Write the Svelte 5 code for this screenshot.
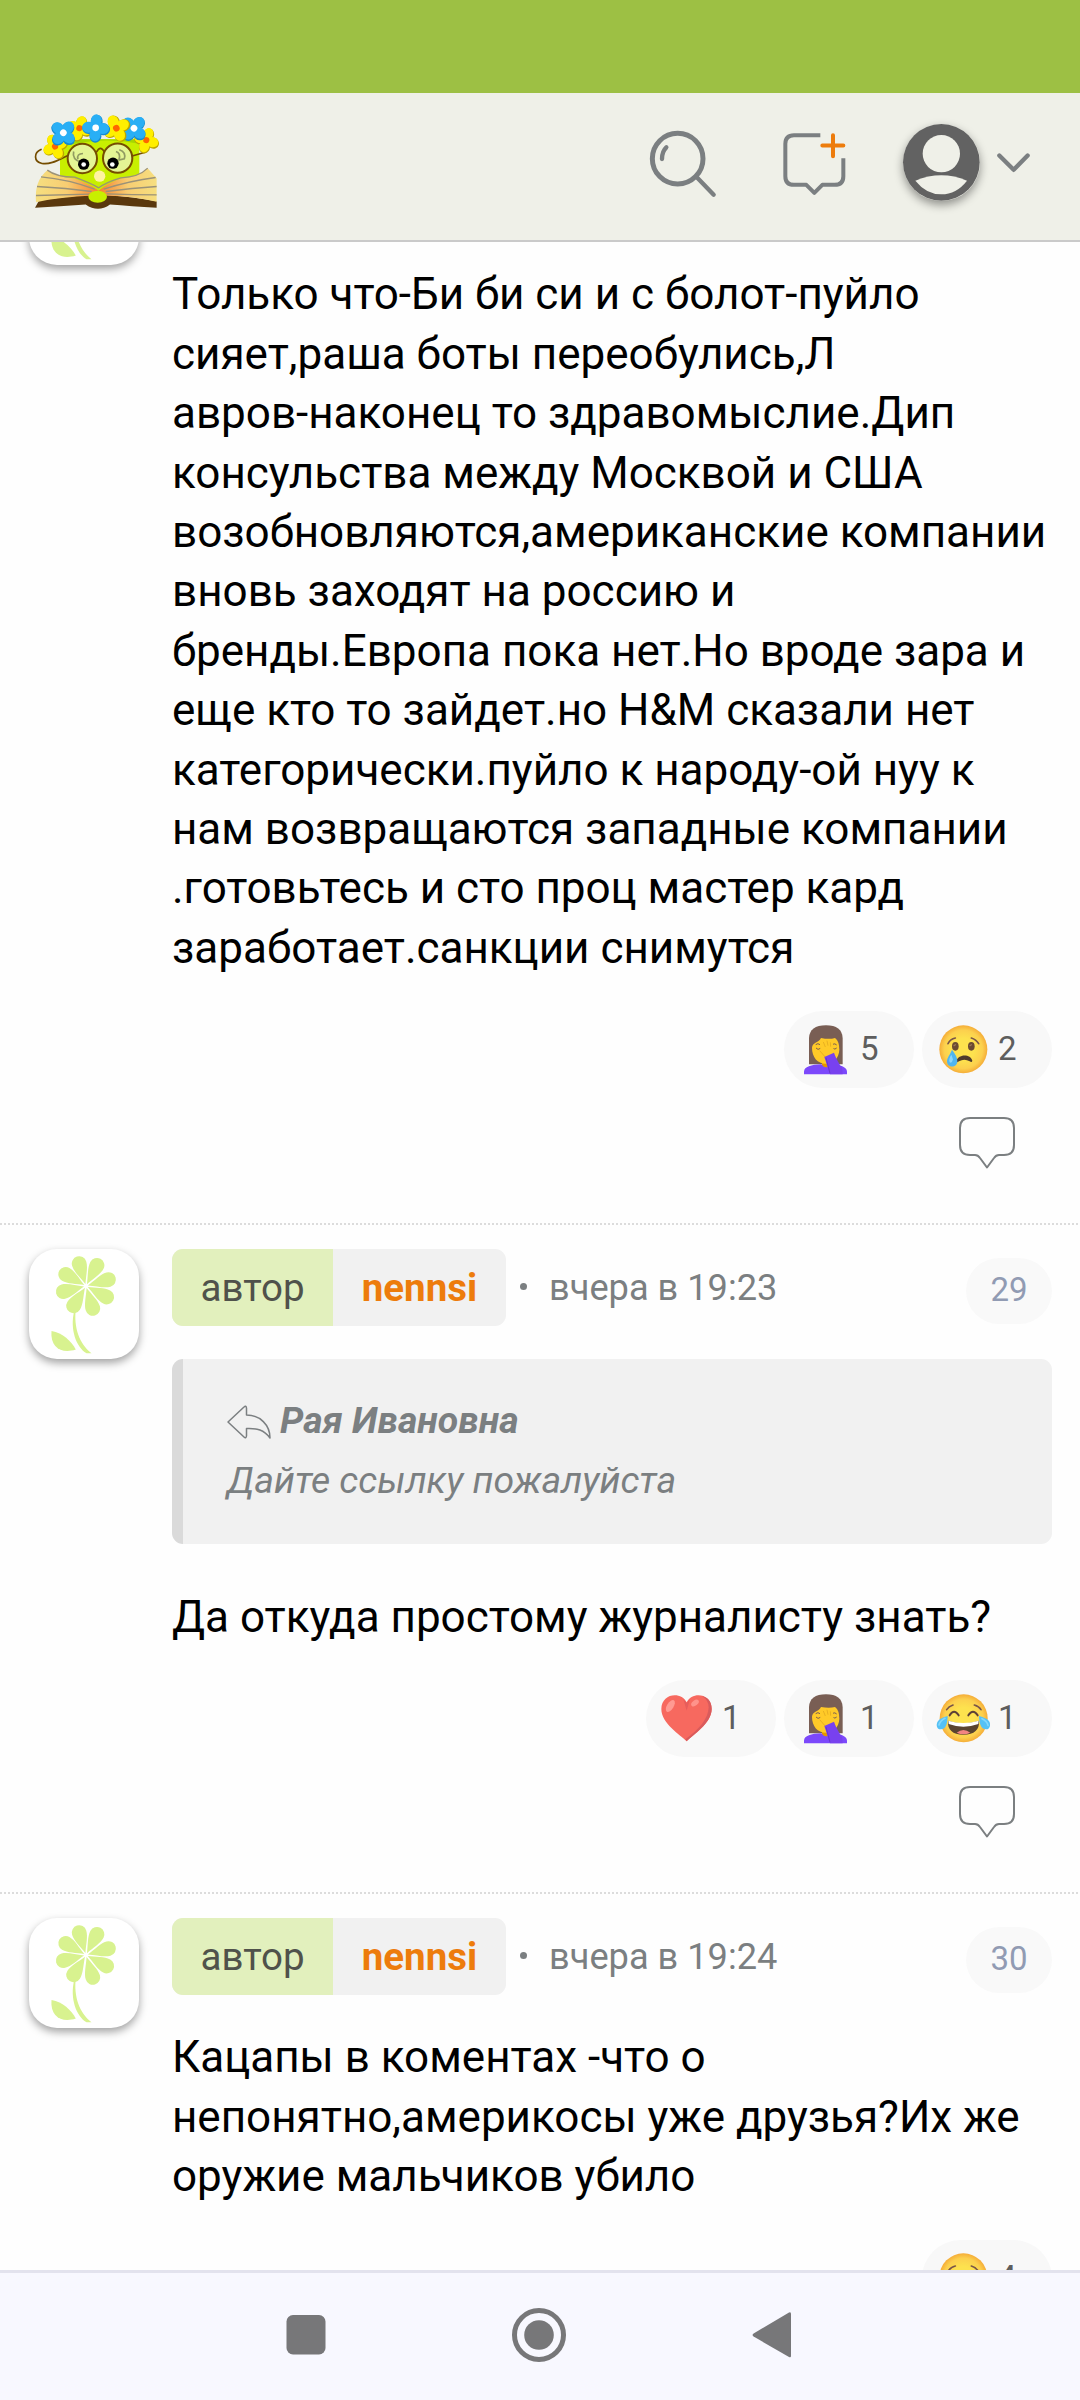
<script lang="ts">
  type Reaction = { kind: string; count: number };
  type Comment = {
    number?: number;
    author?: string;
    time?: string;
    quote?: { name: string; text: string };
    text: string;
    reactions: Reaction[];
  };

  const petals = [-17, 28, 74, 118, 163, 212, 256, 300];

  let comments = $state<Comment[]>([
    {
      text: `Только что-Би би си и с болот-пуйло
сияет,раша боты переобулись,Л
авров-наконец то здравомыслие.Дип
консульства между Москвой и США
возобновляются,американские компании
вновь заходят на россию и
бренды.Европа пока нет.Но вроде зара и
еще кто то зайдет.но H&M сказали нет
категорически.пуйло к народу-ой нуу к
нам возвращаются западные компании
.готовьтесь и сто проц мастер кард
заработает.санкции снимутся`,
      reactions: [
        { kind: "facepalm", count: 5 },
        { kind: "cry", count: 2 },
      ],
    },
    {
      number: 29,
      author: "nennsi",
      time: "вчера в 19:23",
      quote: { name: "Рая Ивановна", text: "Дайте ссылку пожалуйста" },
      text: "Да откуда простому журналисту знать?",
      reactions: [
        { kind: "heart", count: 1 },
        { kind: "facepalm", count: 1 },
        { kind: "joy", count: 1 },
      ],
    },
    {
      number: 30,
      author: "nennsi",
      time: "вчера в 19:24",
      text: `Кацапы в коментах -что о
непонятно,америкосы уже друзья?Их же
оружие мальчиков убило`,
      reactions: [{ kind: "cry", count: 4 }],
    },
  ]);
</script>

{#snippet blossom(x, y, r, fill, edge, heart)}
  <g transform="translate({x} {y}) rotate({r})">
    {#each [0, 90, 180, 270] as a}
      <ellipse cy="-22" rx="18" ry="20" fill={edge} transform="translate(1.500 2.500) rotate({a})" />
    {/each}
    {#each [0, 90, 180, 270] as a}
      <ellipse cy="-21" rx="16.5" ry="19.5" {fill} transform="rotate({a})" />
    {/each}
    <circle r="10" fill={heart} />
  </g>
{/snippet}

{#snippet emoji(kind)}
  {#if kind === "facepalm"}
    <svg class="emoji" viewBox="117 98 162 162">
      <path d="M147 222V143Q149 105 198 105Q246 105 248 143V222Z" fill="#795e54" />
      <path d="M186 212H205V238H186Z" fill="#e59600" />
      <path d="M156 172C157 156 177 157 183 143Q208 148 225 143C237 153 237 164 238 178C237 204 220 220 197 220C173 220 156 201 156 172Z" fill="#ffca28" />
      <path d="M132 252V244C133 229 153 223 184 222Q192 234 205 230L217 224C246 223 261 232 261 244V252Z" fill="#7c48fb" />
      <path d="M167 163Q174 157 180 163M168 173Q174 181 181 174M218 162Q225 158 230 164M219 174Q225 179 230 173" fill="none" stroke="#795e54" stroke-width="3" />
      <path d="M180 162C180 154 186 153 190 160L188 154Q190 146 196 153L199 158L200 150Q206 144 209 152L210 157Q217 152 219 160L222 187L200 199C188 192 182 180 180 162Z" fill="#ffca28" />
      <path d="M179 181L200 205M190 155L196 170M201 151L204 166M211 156L212 169" fill="none" stroke="#dca31c" stroke-width="2" />
      <path d="M193 200L222 187Q229 208 247 235L248 252H210Z" fill="#7841ef" />
      <path d="M198 203L210 249" fill="none" stroke="#6637ce" stroke-width="3" />
    </svg>
  {:else if kind === "cry"}
    <svg class="emoji" viewBox="531 98 162 162">
      <circle cx="610" cy="177" r="72" fill="url(#face)" />
      <path d="M564 160Q571 146 586 143M634 143Q648 147 656 160" fill="none" stroke="#795548" stroke-width="5" stroke-linecap="round" />
      <ellipse cx="586" cy="168" rx="10" ry="13" fill="#6b4a32" />
      <ellipse cx="634" cy="168" rx="10" ry="13" fill="#6b4a32" />
      <path d="M582 166l4-3M630 166l4-3" stroke="#9a7757" stroke-width="4" stroke-linecap="round" />
      <path d="M589 215C592 190 632 190 637 211Q636 218 629 213Q613 203 597 213Q590 218 589 215Z" fill="#4e3b2c" />
      <path d="M576 178C586 192 592 201 592 213C592 234 561 234 561 213C561 202 570 193 576 178Z" fill="#4fb5ef" />
      <path d="M574 193Q565 207 569 216Q576 220 579 207Z" fill="#8ad5fa" />
    </svg>
  {:else if kind === "joy"}
    <svg class="emoji" viewBox="951 95 162 162">
      <circle cx="1031" cy="174" r="72" fill="url(#face)" />
      <path d="M980 148Q986 138 999 134M1063 134Q1077 138 1083 148" fill="none" stroke="#795548" stroke-width="5" stroke-linecap="round" />
      <path d="M989 165Q1002 143 1016 165M1045 165Q1059 143 1073 165" fill="none" stroke="#5d4037" stroke-width="6" stroke-linecap="round" />
      <path d="M984 181Q1030 196 1077 181Q1080 222 1030 223Q981 222 984 181Z" fill="#59442f" />
      <path d="M985 181Q1030 195 1076 181L1075 191Q1030 207 986 191Z" fill="#fff" />
      <path d="M1010 217Q1030 201 1051 217Q1030 227 1010 217Z" fill="#f28482" />
      <path d="M983 167Q982 207 963 207C947 207 948 188 955 181Q961 173 983 167ZM1077 167Q1078 207 1098 207C1112 207 1113 188 1106 181Q1099 173 1077 167Z" fill="#55c1f5" />
      <path d="M975 174Q960 182 957 194M1086 175Q1102 183 1104 195" fill="none" stroke="#83d7fb" stroke-width="5" stroke-linecap="round" />
    </svg>
  {:else}
    <svg class="emoji" viewBox="123 95 162 162">
      <path d="M200 243C180 222 124 190 124 146C124 98 184 92 200 126C216 92 275 98 275 146C275 190 220 222 200 243Z" fill="#f7695f" />
      <path d="M247 108C268 112 275 129 275 146C275 188 220 222 200 243L196 237C237 207 265 176 266 141Q266 121 247 108Z" fill="#d95b5c" />
      <path d="M190 117L200 128L210 116L200 151Z" fill="#e75d5b" />
      <ellipse cx="151" cy="137" rx="10" ry="20" transform="rotate(32 151 137)" fill="#ff9a92" />
      <ellipse cx="225" cy="128" rx="8" ry="13" transform="rotate(52 225 128)" fill="#ff938b" />
    </svg>
  {/if}
{/snippet}

<div class="screen">
  <div class="status"></div>

  <header>
    <svg class="logo" viewBox="100 99.5 375 295">
      <defs>
        <linearGradient id="page-left">
          <stop offset="0" stop-color="#f6df80" />
          <stop offset=".5" stop-color="#f8cd72" />
          <stop offset="1" stop-color="#f5822e" />
        </linearGradient>
        <linearGradient id="page-right" x1="1" x2="0">
          <stop offset="0" stop-color="#f6df80" />
          <stop offset=".5" stop-color="#f8cd72" />
          <stop offset="1" stop-color="#f5822e" />
        </linearGradient>
        <radialGradient id="face">
          <stop offset=".45" stop-color="#fde24e" />
          <stop offset=".8" stop-color="#fcd04e" />
          <stop offset="1" stop-color="#f5ad38" />
        </radialGradient>
      </defs>
      <path d="M181 178H419V310L300 350L181 310Z" fill="#c8ef00" />
      <path d="M183 178H419V192Q300 168 183 202Z" fill="#a5d800" />
      <path d="M106 384L118 362Q210 347 270 346H325Q400 350 471 364V384Q395 379 331 374Q295 400 258 374Q180 379 106 384Z" fill="#5a380d" />
      <path d="M143 271Q170 292 225 296Q275 315 297 333L280 347Q180 352 109 367Q103 303 143 271Z" fill="url(#page-left)" />
      <path d="M444 265Q418 292 363 296Q320 311 297 333L317 347Q410 350 471 366V295Z" fill="url(#page-right)" />
      <path d="M143 271Q170 292 225 292Q275 311 297 324Q320 307 363 294Q418 292 444 265M124 291Q205 298 285 328M112 320Q200 325 276 335M109 347Q190 345 272 343M468 293Q390 303 312 328M471 320Q400 325 318 335M471 345Q400 345 321 342" fill="none" stroke="#9b9278" stroke-width="4" />
      <ellipse cx="294" cy="351" rx="28" ry="18" fill="#c8ef00" />
      <circle cx="300" cy="289" r="17" fill="#fff3a1" />
      <circle cx="248" cy="236" r="44" fill="#e4f594" stroke="#754d00" stroke-width="6" />
      <circle cx="354" cy="235" r="44" fill="#e4f594" stroke="#754d00" stroke-width="6" />
      <path d="M291 216Q302 195 314 216M203 228C180 238 154 256 127 251C101 245 102 218 124 209M400 228L434 218" fill="none" stroke="#754d00" stroke-width="5" stroke-linecap="round" />
      <path d="M222 215Q216 239 245 248M250 221Q230 222 235 238M359 210Q380 217 374 237L356 241M349 215Q364 220 358 239" fill="none" stroke="#919b62" stroke-width="5" />
      <circle cx="252" cy="253" r="17" />
      <circle cx="340" cy="250" r="17" />
      <circle cx="252" cy="254" r="7" fill="#fff" />
      <circle cx="338" cy="254" r="7" fill="#fff" />
      <g transform="translate(166 200) scale(.92)">
        {@render blossom(0, 0, -25, "#ffef00", "#bda500", "#ff6500")}
      </g>
      <g transform="translate(239 145) scale(.92)">
        {@render blossom(0, 0, 18, "#ffef00", "#bda500", "#ff6500")}
      </g>
      <g transform="translate(440 181) scale(.92)">
        {@render blossom(0, 0, 18, "#ffef00", "#bda500", "#ff6500")}
      </g>
      {@render blossom(191, 159, 42, "#29aff5", "#168ace", "#fff")}
      {@render blossom(403, 145, 42, "#29aff5", "#168ace", "#fff")}
      {@render blossom(350, 145, -26, "#ffef00", "#bda500", "#ff6500")}
      {@render blossom(288, 144, 5, "#29aff5", "#168ace", "#fff")}
    </svg>

    <div class="tools">
      <svg class="search" viewBox="85 142 210 210">
        <circle cx="174" cy="237" r="76" stroke-width="15" />
        <path d="M230 291L282 345" stroke-width="13" />
        <path d="M127 238Q127 215 140 203" stroke-width="13" />
      </svg>
      <svg class="post" viewBox="485 149.5 195 195">
        <path d="M600 165H521Q495 165 495 191V288Q495 314 521 314H558L582 338L606 314H643Q669 314 669 288V234" stroke-linecap="butt" />
        <path class="plus" d="M606 196H669M638 165V228" />
      </svg>
      <svg class="user" viewBox="850 132 230 230">
        <circle cx="965" cy="247" r="115" fill="#626262" />
        <circle cx="965" cy="221" r="56" fill="#eff0e8" />
        <path d="M887 302Q965 270 1042 302Q1010 343 965 343Q920 343 887 302Z" fill="#eff0e8" />
      </svg>
      <svg class="chevron" viewBox="1131 214.5 100 65">
        <path d="M1138 225L1181 268L1223 225" />
      </svg>
    </div>
  </header>

  <main>
    {#each comments as c}
      <article class:cut={!c.author}>
        <svg class="avatar" viewBox="0 0 110 110">
          {#each petals as angle}
            <path
              transform="translate(57 37) rotate({angle})"
              d="M0-2C-3-10-7.4-17-7.4-23.4A7.4 7.4 0 0 1 7.4-23.4C7.4-17 3-10 0-2Z"
            />
          {/each}
          <path d="M45 63C41 80 47 98 57.5 104.3H62.5C53 97 45 83 46.5 63Z" />
          <path d="M22.5 82C34 84 42 92 46.8 100.5C33 105 21 99 22.5 82Z" />
        </svg>

        <div class="body">
          {#if c.author}
            <div class="meta">
              <div class="name">
                <span class="role">автор</span>
                <span class="nick">{c.author}</span>
              </div>
              <span class="dot"></span>
              <span class="time">{c.time}</span>
              <span class="number">{c.number}</span>
            </div>
          {/if}

          {#if c.quote}
            <blockquote>
              <div class="who">
                <svg class="back" viewBox="0 0 44 34">
                  <path d="M1 17L17 2Q19 0 19.5 3V10C33 10 43 20 43 33C37 25 30 23 19.5 23.5V31Q19 34 17 32Z" />
                </svg>
                <b>{c.quote.name}</b>
              </div>
              <div>{c.quote.text}</div>
            </blockquote>
          {/if}

          <p>{c.text}</p>

          <div class="reactions">
            {#each c.reactions as r}
              <div class="pill">
                {@render emoji(r.kind)}
                <span>{r.count}</span>
              </div>
            {/each}
          </div>

          <div class="actions">
            <svg class="reply" viewBox="0 0 56 52">
              <path d="M11 1H45Q55 1 55 11V28Q55 38 45 38H40Q37 38 35 41L28 50.5L21 41Q19 38 16 38H11Q1 38 1 28V11Q1 1 11 1Z" />
            </svg>
          </div>
        </div>
      </article>
    {/each}
  </main>

  <nav>
    <svg viewBox="0 0 54 54"><rect x="7.5" y="7" width="39" height="39.5" rx="6.5" /></svg>
    <svg viewBox="0 0 54 54">
      <circle class="ring" cx="27" cy="27" r="24.5" />
      <circle cx="27" cy="27" r="14.8" />
    </svg>
    <svg viewBox="0 0 54 54"><path d="M8.6 28.6L44 49Q46 50 46 48V6Q46 3.500 44 4.600L8.600 25.400Q6.500 27 8.600 28.600Z" /></svg>
  </nav>
</div>

<style>
  :global(body) {
    background: #fff;
  }

  .screen {
    display: flex;
    flex-direction: column;
    height: 2400px;
    overflow: hidden;
    background: #fefefe;
    font-family: Roboto, sans-serif;
    color: #000;
  }

  .status {
    flex: none;
    height: 93px;
    background: #9dc044;
  }

  header {
    box-sizing: border-box;
    position: relative;
    z-index: 1;
    flex: none;
    display: flex;
    align-items: center;
    justify-content: space-between;
    height: 149px;
    padding: 0 50px 8.3px 33.3px;
    background: #eff0e8;
    border-bottom: 2px solid #cacaca;
  }

  svg {
    display: block;
    flex: none;
    overflow: visible;
  }

  .logo {
    width: 125px;
    height: 98.3px;
  }

  .tools {
    display: flex;
    align-items: center;
  }

  .search,
  .post,
  .chevron {
    fill: none;
    stroke: #7b7f81;
    stroke-width: 12;
    stroke-linecap: round;
    stroke-linejoin: round;
  }

  .search {
    width: 70px;
    height: 70px;
  }

  .post {
    width: 65px;
    height: 65px;
    margin-left: 63.4px;
  }

  .plus {
    stroke: #ed7c0c;
  }

  .user {
    width: 76.7px;
    height: 76.7px;
    margin-left: 56.6px;
    border-radius: 50%;
    box-shadow: 0 4px 10px rgba(0, 0, 0, 0.4);
  }

  .chevron {
    width: 33.3px;
    height: 21.7px;
    margin-left: 16.7px;
    stroke-width: 13;
  }

  main {
    flex: 1;
    min-height: 0;
    overflow: hidden;
  }

  article {
    display: flex;
    padding: 26px 28px 0 29px;
  }

  article + article {
    background: repeating-linear-gradient(90deg, #dcdcdc 0 2px, transparent 2px 4px) top / 100% 2px no-repeat;
  }

  .avatar {
    box-sizing: border-box;
    width: 110px;
    height: 110px;
    margin-right: 33px;
    border-radius: 28px;
    background: #fff;
    box-shadow: 0 4px 9px rgba(0, 0, 0, 0.36);
    fill: #d8f28f;
  }

  /* first comment is scrolled half under the header */
  .cut {
    padding-top: 0;
  }

  .cut .avatar {
    margin-top: -87px;
  }

  .cut .body {
    padding-top: 23.3px;
  }

  .body {
    flex: 1;
    min-width: 0;
  }

  .meta {
    display: flex;
    align-items: center;
    height: 77px;
    margin-bottom: 33px;
    font-size: 38.5px;
    color: #7b7f81;
  }

  .name {
    display: flex;
    height: 77px;
    line-height: 77px;
    border-radius: 11px;
    overflow: hidden;
    background: #f1f1f1;
  }

  .role {
    box-sizing: border-box;
    width: 161px;
    text-align: center;
    background: #e2f0bd;
    color: #50524b;
  }

  .nick {
    box-sizing: border-box;
    width: 173px;
    text-align: center;
    font-weight: 700;
    color: #ed7c0c;
  }

  .dot {
    width: 7px;
    height: 7px;
    margin: 0 22px 2px 14px;
    border-radius: 50%;
    background: #7b7f81;
  }

  .time {
    font-size: 36.2px;
  }

  .number {
    box-sizing: border-box;
    width: 86px;
    height: 66px;
    margin: 6px 0 0 auto;
    border-radius: 33px;
    background: #f9f9f9;
    color: #919bb3;
    font-size: 33px;
    line-height: 64px;
    text-align: center;
  }

  blockquote {
    margin: 0 0 44px;
    padding: 32px 44px 34px;
    border-left: 11px solid #dadada;
    border-radius: 11px;
    background: #f1f1f1;
    color: #7b7f81;
    font-size: 37.4px;
    font-style: italic;
    line-height: 59.4px;
  }

  .who {
    display: flex;
    align-items: center;
    gap: 9px;
  }

  .back {
    width: 44px;
    height: 34px;
    margin-top: 2px;
    fill: none;
    stroke: #7b7f81;
    stroke-width: 1.5;
    stroke-linejoin: round;
  }

  p {
    margin: 0 0 33px;
    font-size: 44px;
    line-height: 59.4px;
    white-space: pre;
  }

  .reactions {
    display: flex;
    justify-content: flex-end;
    gap: 8px;
  }

  .pill {
    box-sizing: border-box;
    display: flex;
    align-items: center;
    gap: 7px;
    width: 130px;
    height: 77px;
    padding-left: 15px;
    border-radius: 38.5px;
    background: #f8f8f8;
    color: #5e5e5e;
    font-size: 33px;
  }

  .pill span {
    padding-bottom: 2px;
  }

  .emoji {
    width: 54px;
    height: 54px;
  }

  .actions {
    display: flex;
    justify-content: flex-end;
    padding: 29px 37px 54px 0;
  }

  .reply {
    width: 56px;
    height: 52px;
    fill: none;
    stroke: #7b7f81;
    stroke-width: 2;
    stroke-linejoin: round;
  }

  nav {
    position: relative;
    box-sizing: border-box;
    flex: none;
    display: flex;
    justify-content: center;
    gap: 179px;
    height: 130px;
    padding: 35px 2px 0 0;
    border-top: 3px solid #e3e3ee;
    background: #f8f8ff;
    fill: #777779;
  }

  nav svg {
    width: 54px;
    height: 54px;
  }

  .ring {
    fill: none;
    stroke: #777779;
    stroke-width: 5;
  }
</style>
